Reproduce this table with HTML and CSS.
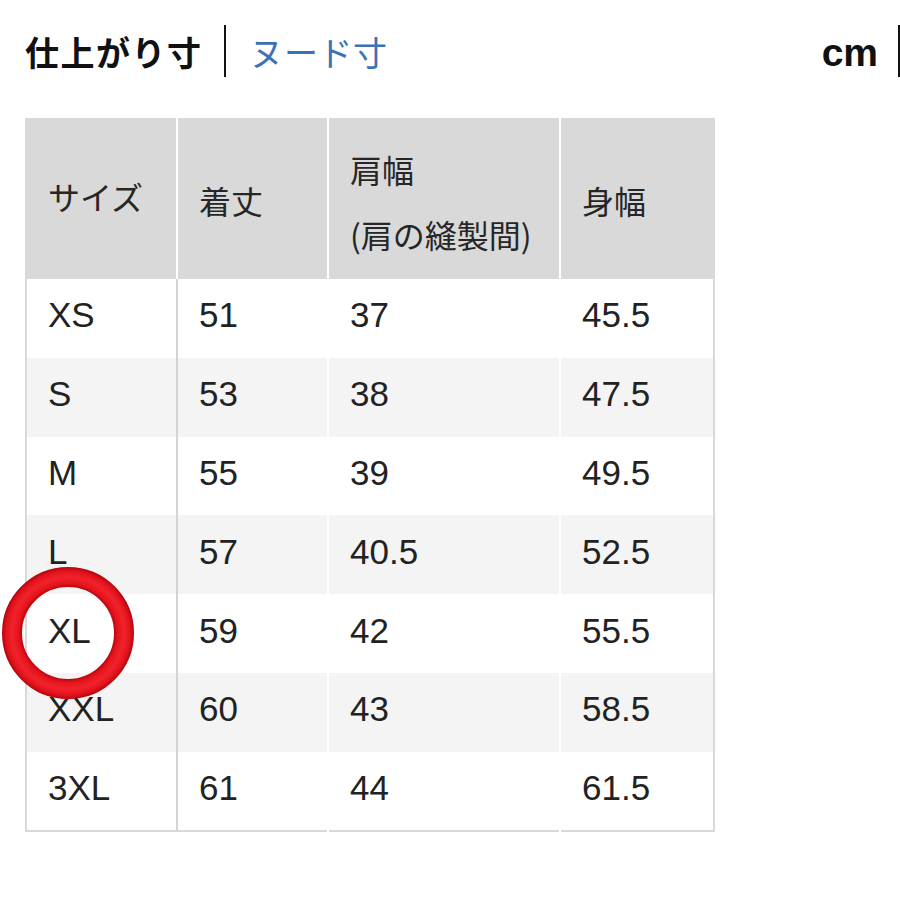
FILE: index.html
```html
<!DOCTYPE html>
<html lang="ja">
<head>
<meta charset="utf-8">
<link rel="stylesheet" href="styles.css">
</head>
<body>
<div class="page">
  <div class="top">
    <span class="title">仕上がり寸</span>
    <span class="sep"></span>
    <span class="nude">ヌード寸</span>
    <span class="cm">cm</span>
    <span class="sep sep-end"></span>
  </div>
  <div class="table-wrap">
    <table class="size-table">
      <colgroup>
        <col class="c1"><col class="c2"><col class="c3"><col class="c4">
      </colgroup>
      <thead>
        <tr>
          <th>サイズ</th>
          <th class="lower">着丈</th>
          <th class="multi"><span class="hl">肩幅</span><span class="hl">(肩の縫製間)</span></th>
          <th class="lower">身幅</th>
        </tr>
      </thead>
      <tbody>
        <tr><td>XS</td><td>51</td><td>37</td><td>45.5</td></tr>
        <tr><td>S</td><td>53</td><td>38</td><td>47.5</td></tr>
        <tr><td>M</td><td>55</td><td>39</td><td>49.5</td></tr>
        <tr><td>L</td><td>57</td><td>40.5</td><td>52.5</td></tr>
        <tr><td>XL</td><td>59</td><td>42</td><td>55.5</td></tr>
        <tr><td>XXL</td><td>60</td><td>43</td><td>58.5</td></tr>
        <tr><td>3XL</td><td>61</td><td>44</td><td>61.5</td></tr>
      </tbody>
    </table>
    <svg class="ring" width="134" height="134" viewBox="0 0 134 134" aria-hidden="true">
      <defs>
        <radialGradient id="rg" cx="67" cy="67" r="67" gradientUnits="userSpaceOnUse">
          <stop offset="0.68" stop-color="#b8000a"/>
          <stop offset="0.74" stop-color="#e3141c"/>
          <stop offset="0.84" stop-color="#f2222b"/>
          <stop offset="0.93" stop-color="#e0121b"/>
          <stop offset="1" stop-color="#a8000a"/>
        </radialGradient>
      </defs>
      <circle cx="67" cy="67" r="56" fill="none" stroke="url(#rg)" stroke-width="20"/>
    </svg>
  </div>
</div>
</body>
</html>
```
FILE: styles.css
```css
html, body {
  margin: 0;
  padding: 0;
  background: #ffffff;
}

body {
  font-family: "Liberation Sans", "Noto Sans CJK JP", sans-serif;
  color: #222;
}

.page {
  padding: 25px 0 0 25px;
  width: 875px;
}

.top {
  display: flex;
  align-items: center;
  height: 52px;
}

.title {
  font-family: "Noto Sans CJK JP", sans-serif;
  font-weight: 700;
  font-size: 34px;
  color: #111;
  letter-spacing: 1.5px;
}

.sep {
  width: 2px;
  height: 52px;
  background: #111;
  margin: 0 24px 0 21px;
}

.sep-end {
  margin: 0 0 0 20px;
}

.nude {
  font-family: "Noto Sans CJK JP", sans-serif;
  font-size: 34px;
  color: #3a72b8;
  letter-spacing: 0.5px;
}

.cm {
  margin-left: auto;
  font-weight: 700;
  font-size: 39px;
  color: #111;
  padding-top: 4px;
}

.table-wrap {
  position: relative;
  margin-top: 41px;
  width: 690px;
}

.size-table {
  width: 688px;
  table-layout: fixed;
  border-collapse: collapse;
  border: 2px solid #d9d9d9;
}

.c1 { width: 151px; }
.c2 { width: 151px; }
.c3 { width: 232px; }
.c4 { width: 154px; }

.size-table th {
  background: #d9d9d9;
  height: 160px;
  padding: 0 0 8px 21px;
  box-sizing: border-box;
  text-align: left;
  vertical-align: middle;
  font-weight: 400;
  font-size: 32px;
  color: #262626;
  font-family: "Noto Sans CJK JP", sans-serif;
  border-right: 2px solid #ffffff;
}

.size-table th.lower {
  padding-bottom: 0;
}

.size-table th.multi {
  padding-bottom: 0;
  padding-top: 4px;
}

.size-table th:last-child {
  border-right: none;
}

.hl {
  display: block;
  line-height: 65px;
}

.size-table td {
  height: 78.8px;
  padding: 0 0 6px 21px;
  font-size: 35px;
  color: #222;
  vertical-align: middle;
  border-right: 2px solid #ffffff;
  box-sizing: border-box;
}

.size-table td:first-child {
  border-right: 2px solid #d4d4d4;
}

.size-table td:last-child {
  border-right: none;
}

.size-table tbody tr:nth-child(even) td {
  background: #f4f4f4;
}

.size-table tbody tr:nth-child(odd) td {
  background: #ffffff;
}

.ring {
  position: absolute;
  left: -24px;
  top: 448px;
}
```
